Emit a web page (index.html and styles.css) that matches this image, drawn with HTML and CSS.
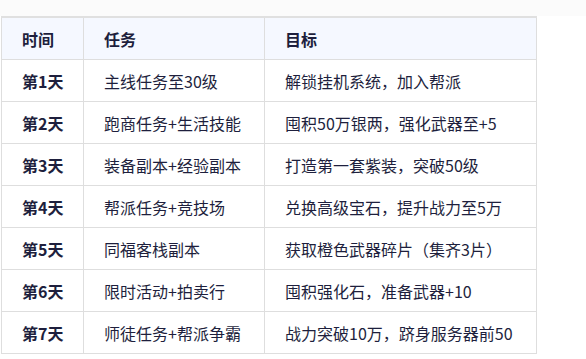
FILE: index.html
```html
<!DOCTYPE html>
<html lang="zh">
<head>
<meta charset="utf-8">
<link rel="stylesheet" href="styles.css">
</head>
<body>
<div class="strip"></div>
<table class="plan">
  <colgroup><col class="c1"><col class="c2"><col class="c3"></colgroup>
  <thead>
    <tr><th>时间</th><th>任务</th><th>目标</th></tr>
  </thead>
  <tbody>
    <tr><td class="day">第1天</td><td>主线任务至30级</td><td>解锁挂机系统，加入帮派</td></tr>
    <tr><td class="day">第2天</td><td>跑商任务+生活技能</td><td>囤积50万银两，强化武器至+5</td></tr>
    <tr><td class="day">第3天</td><td>装备副本+经验副本</td><td>打造第一套紫装，突破50级</td></tr>
    <tr><td class="day">第4天</td><td>帮派任务+竞技场</td><td>兑换高级宝石，提升战力至5万</td></tr>
    <tr><td class="day">第5天</td><td>同福客栈副本</td><td>获取橙色武器碎片（集齐3片）</td></tr>
    <tr><td class="day">第6天</td><td>限时活动+拍卖行</td><td>囤积强化石，准备武器+10</td></tr>
    <tr><td class="day">第7天</td><td>师徒任务+帮派争霸</td><td>战力突破10万，跻身服务器前50</td></tr>
  </tbody>
</table>
</body>
</html>
```
FILE: styles.css
```css
html, body {
  margin: 0;
  padding: 0;
  background: #ffffff;
}
body {
  font-family: "Noto Sans CJK SC", "Noto Sans", sans-serif;
  color: #1e1f3d;
}
.strip {
  height: 16px;
  background: #fbfbfb;
}
.plan {
  margin-left: 1px;
  width: 535px;
  table-layout: fixed;
  border-collapse: collapse;
  font-size: 16px;
}
.c1 { width: 82px; }
.c2 { width: 181px; }
.c3 { width: 272px; }
.plan th, .plan td {
  border: 1px solid #dedede;
  height: 41px;
  padding: 0 20px;
  text-align: left;
  vertical-align: middle;
  line-height: 22px;
  white-space: nowrap;
}
.plan thead tr {
  border-top: 2px solid #e0e0e0;
}
.plan th {
  background: #f5f8ff;
  font-weight: 700;
}
.plan td.day {
  font-weight: 700;
}
```
